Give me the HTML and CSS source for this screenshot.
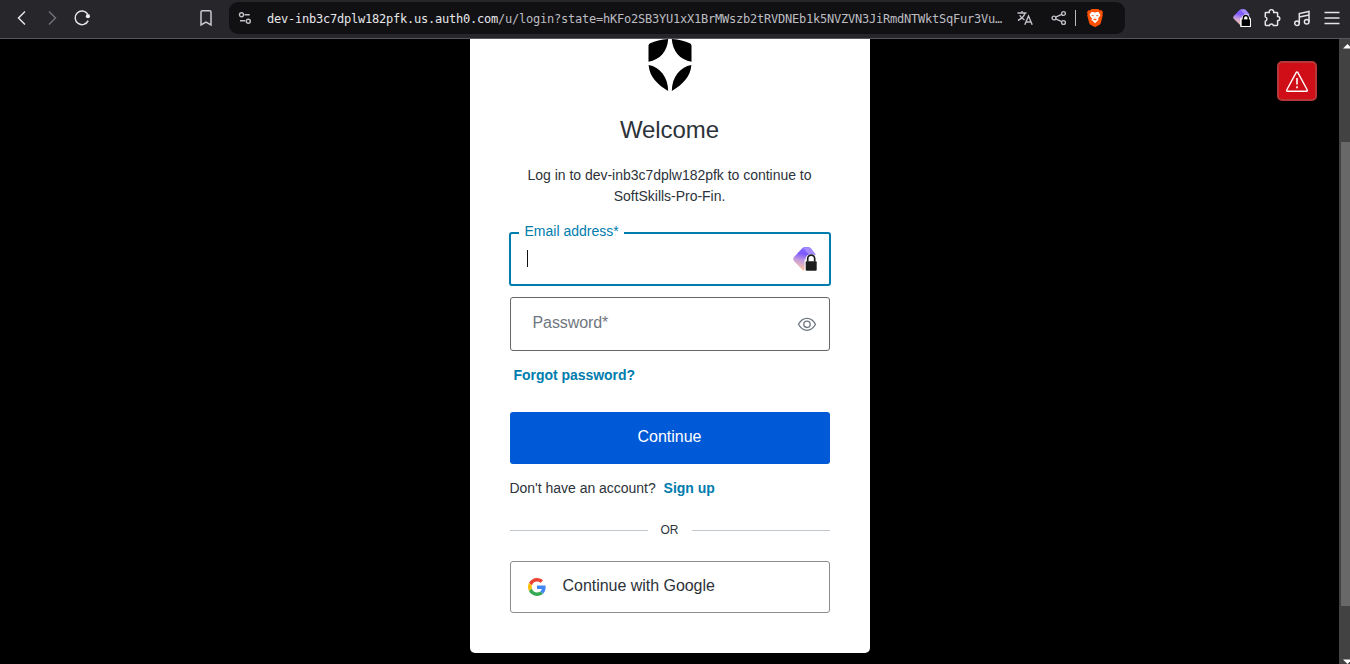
FILE: index.html
```
<!DOCTYPE html>
<html lang="en">
<head>
<meta charset="utf-8">
<title>Log in | SoftSkills-Pro-Fin</title>
<link rel="stylesheet" href="styles.css">
</head>
<body>
<header class="toolbar">
  <nav class="nav">
    <svg class="back" width="12" height="18" viewBox="0 0 12 18"><path d="M9 2.5 2.5 9 9 15.5"/></svg>
    <svg class="forward" width="12" height="18" viewBox="0 0 12 18"><path d="M3 2.5 9.5 9 3 15.5"/></svg>
    <svg class="reload" width="18" height="18" viewBox="0 0 18 18"><path d="M15.2 11.600A6.8 6.8 0 1 1 14.6 5"/><circle cx="14.9" cy="7.2" r="2.100" class="dot"/></svg>
  </nav>
  <svg class="bookmark" width="14" height="18" viewBox="0 0 14 18"><path d="M2 3a1.3 1.3 0 0 1 1.3-1.3h7.400A1.3 1.3 0 0 1 12 3v13l-5-3L2 16Z"/></svg>
  <div class="address">
    <svg class="tune" width="14" height="14" viewBox="0 0 14 14"><circle cx="3.5" cy="3.8" r="2"/><path d="M6.500 3.8h5.2M2 9.800h5.2"/><circle cx="10.3" cy="10.2" r="2"/></svg>
    <div class="url"><span class="host">dev-inb3c7dplw182pfk.us.auth0.com</span>/u/login?state=hKFo2SB3YU1xX1BrMWszb2tRVDNEb1k5NVZVN3JiRmdNTWktSqFur3Vu…</div>
    <svg class="translate" width="16" height="16" viewBox="0 0 16 16"><path d="M.5 3h9M5 1v2M8 3C7 6.500 4 9 1 10.500M2.800 5.200c1 2.200 2.500 3.500 4.700 4.800M7.800 14.700 11.500 6l3.700 8.700M9 12h5"/></svg>
    <svg class="share" width="16" height="16" viewBox="0 0 16 16"><circle cx="3" cy="8" r="1.900"/><circle cx="12.500" cy="3.500" r="1.900"/><circle cx="12.500" cy="12.500" r="1.900"/><path d="m4.700 7.200 6-2.900m-6 4.500 6 2.900"/></svg>
    <span class="divider"></span>
    <svg class="lion" width="16" height="18" viewBox="0 0 16 18"><path fill="#ff5000" d="M4.500 0h7L13 1.500 14.600 1.300 16 3.300 15.400 5l.4 1.300-2 7.700c-.3 1-.9 1.600-1.700 2.100L8.800 17.700a1.500 1.500 0 0 1-1.600 0L3.900 16.100c-.8-.5-1.400-1.100-1.700-2.100l-2-7.700L.6 5 0 3.300l1.400-2L3 1.500Z"/><path fill="#fff" d="M4.800 2.800 8 3.400l3.200-.6L13.400 5.500 12.800 7.200l-1.700 2.100.4 1.700-1 .8L8 14.300l-2.500-2.500-1-.8.4-1.700-1.700-2.100-.6-1.700Z"/><path fill="#ff5000" d="m4.200 6 2.700.2-.7 1.200Zm7.600 0-2.700.2.7 1.200ZM5.800 10.200 7.200 9.800 7 7.500l.4 2.300L8 10.400l.6-.6.4-2.300-.2 2.300 1.400.4L8 11.600Z"/></svg>
  </div>
  <div class="actions">
    <svg width="18" height="18" viewBox="0 0 26 26"><defs><linearGradient id="gem" x1=".6" y1="0" x2=".4" y2="1"><stop offset="0" stop-color="#8f72ff"/><stop offset=".3" stop-color="#7a58ff"/><stop offset=".6" stop-color="#c69cdc"/><stop offset="1" stop-color="#ffc8a0"/></linearGradient></defs><path fill="url(#gem)" d="M1 10 9.500 1.500Q11 .5 13 .5h3Q18 .5 19 2l5 6-11 16H11L1 14Q-.5 12 1 10Z"/><path fill="#a58bff" d="M11 .8h5q2 0 3 1.200l5 6-5 2Z"/><path fill="#fff" d="M10.500 13.500h2a6 6 0 0 1 12 0h1.500V26H10.500Z"/><path fill="#000" d="M12.500 15h12v9.500h-12Z"/><path fill="none" stroke="#000" stroke-width="2.200" d="M15 15.500V13a3.500 3.500 0 0 1 7 0v2.500"/></svg>
    <svg class="line" width="18" height="18" viewBox="0 0 18 18"><path d="M3 3.400h3.200a2.300 2.300 0 1 1 4.500 0h3.200a.7.700 0 0 1 .7.700v3.300a2.200 2.200 0 1 1 0 4.400v4a.7.700 0 0 1-.7.700h-3.500a2.050 2.050 0 0 0-4 0H3a.7.700 0 0 1-.7-.7v-3.500a2.300 2.300 0 0 0 0-4.400V4.100A.7.700 0 0 1 3 3.400Z"/></svg>
    <svg class="line" width="18" height="18" viewBox="0 0 18 18"><circle cx="4" cy="14.200" r="2.300"/><circle cx="13.700" cy="12.700" r="2.300"/><path d="M6.300 14.200V4.500L16 2.500v10.200M6.300 8 16 6"/></svg>
    <svg class="line" width="16" height="14" viewBox="0 0 16 14"><path d="M.5 1.500h15M.5 7h15M.5 12.500h15"/></svg>
  </div>
</header>
<div class="page">
  <main class="stage">
    <section class="card">
      <svg class="logo" width="44" height="53" viewBox="0 0 44 53"><path d="M20.200 0C13 .6 7 2 2.200 4.300 1 5 .5 5.800 .5 7V22.700C12 21 19.500 12 20.200 0ZM23.800 0C31 .6 37 2 41.800 4.300 43 5 43.500 5.800 43.500 7V22.700C32 21 24.500 12 23.800 0ZM.6 26C12 28 20 38 20.200 52 9.500 45.500 1.500 38 .6 26ZM43.400 26C32 28 24 38 23.800 52 34.500 45.500 42.500 38 43.400 26Z"/></svg>
      <h1>Welcome</h1>
      <p class="intro">Log in to dev-inb3c7dplw182pfk to continue to SoftSkills-Pro-Fin.</p>
      <div class="field focused">
        <span class="label">Email address*</span>
        <span class="caret"></span>
        <svg class="gem" width="26" height="26" viewBox="0 0 26 26"><path fill="url(#gem)" d="M2 11 10 2.500Q11 1 13 1h3Q18 1 19 2.500l4.500 6L13 24.500H11L2 15Q.5 13 2 11Z"/><path fill="#a58bff" d="M11 1.400h5q2 0 3 1.100l4.500 6-5 2Z"/><path fill="#fff" d="M12.500 13.500h1a5.600 5.600 0 0 1 11.200 0H26V26H12.500Z"/><rect x="13.700" y="15.200" width="11" height="9.500" rx="1" fill="#1c1c1c"/><path fill="none" stroke="#1c1c1c" stroke-width="1.700" d="M15.700 15.500v-2.800a3.500 3.500 0 0 1 7 0v2.800"/></svg>
      </div>
      <div class="field password">
        <span>Password*</span>
        <svg class="eye" width="20" height="16" viewBox="0 0 20 16"><path d="M1.500 8.300C3.500 4.500 6.500 2.300 10 2.300s6.500 2.200 8.500 6c-2 3.800-5 6-8.500 6s-6.500-2.200-8.500-6Z"/><circle cx="10" cy="8.300" r="3.200"/></svg>
      </div>
      <a class="forgot">Forgot password?</a>
      <button class="continue">Continue</button>
      <p class="signup">Don't have an account? <a>Sign up</a></p>
      <div class="or"><span>OR</span></div>
      <button class="google">
        <svg width="18" height="18" viewBox="0 0 48 48"><path fill="#EA4335" d="M24 9.500c3.540 0 6.710 1.220 9.210 3.600l6.850-6.850C35.900 2.380 30.470 0 24 0 14.620 0 6.510 5.380 2.560 13.220l7.980 6.190C12.430 13.720 17.740 9.500 24 9.500z"/><path fill="#4285F4" d="M46.980 24.550c0-1.570-.15-3.090-.38-4.550H24v9.020h12.940c-.58 2.960-2.260 5.480-4.780 7.180l7.730 6c4.510-4.180 7.090-10.360 7.090-17.650z"/><path fill="#FBBC05" d="M10.530 28.590A14.500 14.500 0 0 1 9.770 24c0-1.600.27-3.140.76-4.590l-7.980-6.190A23.900 23.900 0 0 0 0 24c0 3.880.92 7.540 2.560 10.780z"/><path fill="#34A853" d="M24 48c6.480 0 11.930-2.130 15.890-5.810l-7.730-6C30.010 37.640 27.240 38.490 24 38.490c-6.260 0-11.570-4.220-13.470-9.910l-7.980 6.190C6.510 42.620 14.620 48 24 48z"/></svg>
        <span>Continue with Google</span>
      </button>
    </section>
    <div class="alert"><svg width="24" height="24" viewBox="0 0 24 24"><path d="M11.400 3.200a.7.700 0 0 1 1.200 0L22.300 21a.8.800 0 0 1-.7 1.200H2.400A.8.800 0 0 1 1.700 21Z"/><path d="M12 9v6.500M12 17.300v1.900" class="mark"/></svg></div>
  </main>
  <aside class="scrollbar">
    <svg class="arrow" width="9" height="5" viewBox="0 0 9 5"><path d="M0 4.500 4.500 0 9 4.500Z"/></svg>
    <span class="thumb"></span>
    <svg class="arrow" width="9" height="5" viewBox="0 0 9 5"><path d="M0 .5h9L4.500 5Z"/></svg>
  </aside>
</div>
</body>
</html>
```
FILE: styles.css
```
* { box-sizing: border-box; }
body { margin: 0; height: 664px; overflow: hidden; display: flex; flex-direction: column; background: #000; color: #2d333a; font-family: "Liberation Sans", Arial, sans-serif; }
svg { display: block; flex: none; }
h1, p { margin: 0; font-weight: 400; }
button { font: inherit; }

.toolbar { height: 39px; flex: none; display: flex; align-items: center; background: #26262b; border-bottom: 1px solid #55555b; padding: 0 10px 2px 16px; }
.toolbar svg { fill: none; stroke: #e5e5e8; stroke-width: 1.5; }
.nav { display: flex; align-items: center; gap: 18px; width: 184px; }
.toolbar .forward { stroke: #707078; }
.reload { margin-left: -3px; }
.toolbar .dot { fill: #eee; stroke: none; }
.toolbar .bookmark { margin-right: 15px; margin-left: -1px; stroke: #c9c9cf; }
.address { width: 896px; height: 32px; margin-left: 1px; display: flex; align-items: center; background: #111114; border-radius: 9px; padding-left: 9px; }
.toolbar .tune, .toolbar .translate, .toolbar .share { stroke: #c0c0c6; stroke-width: 1.4; }
.url { width: 737px; margin: 0 13px 0 15px; white-space: nowrap; font: 12px/16px "DejaVu Sans Mono", monospace; letter-spacing: -.224px; color: #bdbdc1; }
.url { padding-top: 1px; }
.host { color: #e7e7ea; }
.share { margin-left: 18px; }
.divider { width: 1px; height: 16px; background: #bbb; margin: 0 11px 0 8px; }
.toolbar .lion, .toolbar .actions svg:first-child { stroke: none; }
.actions { margin-left: auto; display: flex; align-items: center; gap: 12px; }
.actions svg:last-child { margin-left: 1px; }

.page { flex: 1; display: flex; min-height: 0; }
.stage { flex: 1; position: relative; display: flex; justify-content: center; align-items: flex-start; }
.card { width: 400px; height: 614px; padding: 0 40px; display: flex; flex-direction: column; background: #fff; border-radius: 0 0 5px 5px; }
.logo { align-self: center; }
h1 { margin-top: 24px; font-size: 24px; line-height: 28px; text-align: center; letter-spacing: -.05px; }
.intro { margin-top: 21px; padding: 0 16px; font-size: 14px; line-height: 21px; text-align: center; letter-spacing: -.02px; }
.field { position: relative; display: flex; align-items: center; justify-content: space-between; height: 54px; border: 1px solid #65676b; border-radius: 3px; font-size: 16px; }
.focused { margin: 25px -1px 0; border: 2px solid #007cad; padding: 0 11px 0 16px; }
.label { position: absolute; left: 8px; top: -13px; padding: 0 5px 0 6px; background: #fff; color: #007cad; font-size: 14px; line-height: 20px; }
.caret { width: 1px; height: 17px; margin-top: -1px; background: #111; }
.password { margin-top: 11px; padding: 0 12px 0 22px; color: #6f7780; }
.password span { margin-top: -2px; letter-spacing: -.08px; }
.eye { fill: none; stroke: #6f7780; stroke-width: 1.3; }
.forgot { margin: 14px 0 0 4px; font-size: 14px; line-height: 20px; font-weight: 700; letter-spacing: -.04px; color: #007cad; }
.continue { margin-top: 27px; height: 52px; border: 0; border-radius: 3px; background: #0059d6; color: #fff; font-size: 16px; padding: 0 0 2px; }
.signup { margin-top: 14px; font-size: 14px; line-height: 21px; letter-spacing: -.02px; }
.signup a { margin-left: 4px; font-weight: 700; color: #007cad; }
.or { margin-top: 21px; height: 20px; display: flex; align-items: center; gap: 13px; font-size: 12px; }
.or::before, .or::after { content: ""; flex: 1; height: 1px; background: #c2c8d0; }
.google { margin-top: 21px; height: 52px; display: flex; align-items: center; gap: 17px; padding: 0 17px; border: 1px solid #8c8c8c; border-radius: 3px; background: #fff; color: #2d333a; font-size: 16px; }
.google span { margin-top: -2px; letter-spacing: -.03px; }
.alert { position: absolute; right: 22px; top: 22px; width: 40px; height: 40px; display: grid; place-items: center; background: #d00e17; border: 2px solid #b63735; border-radius: 5px; }
.alert svg { fill: none; stroke: #fff; stroke-width: 1.4; }
.alert .mark { stroke-width: 1.6; }
.scrollbar { width: 11px; display: flex; flex-direction: column; align-items: flex-end; background: #424242; padding: 5px 0 0 2px; overflow: hidden; }
.arrow { fill: #fff; margin-right: -2px; }
.thumb { width: 9px; height: 464px; margin: 93px 0 53px; background: #686868; flex: none; }
```
